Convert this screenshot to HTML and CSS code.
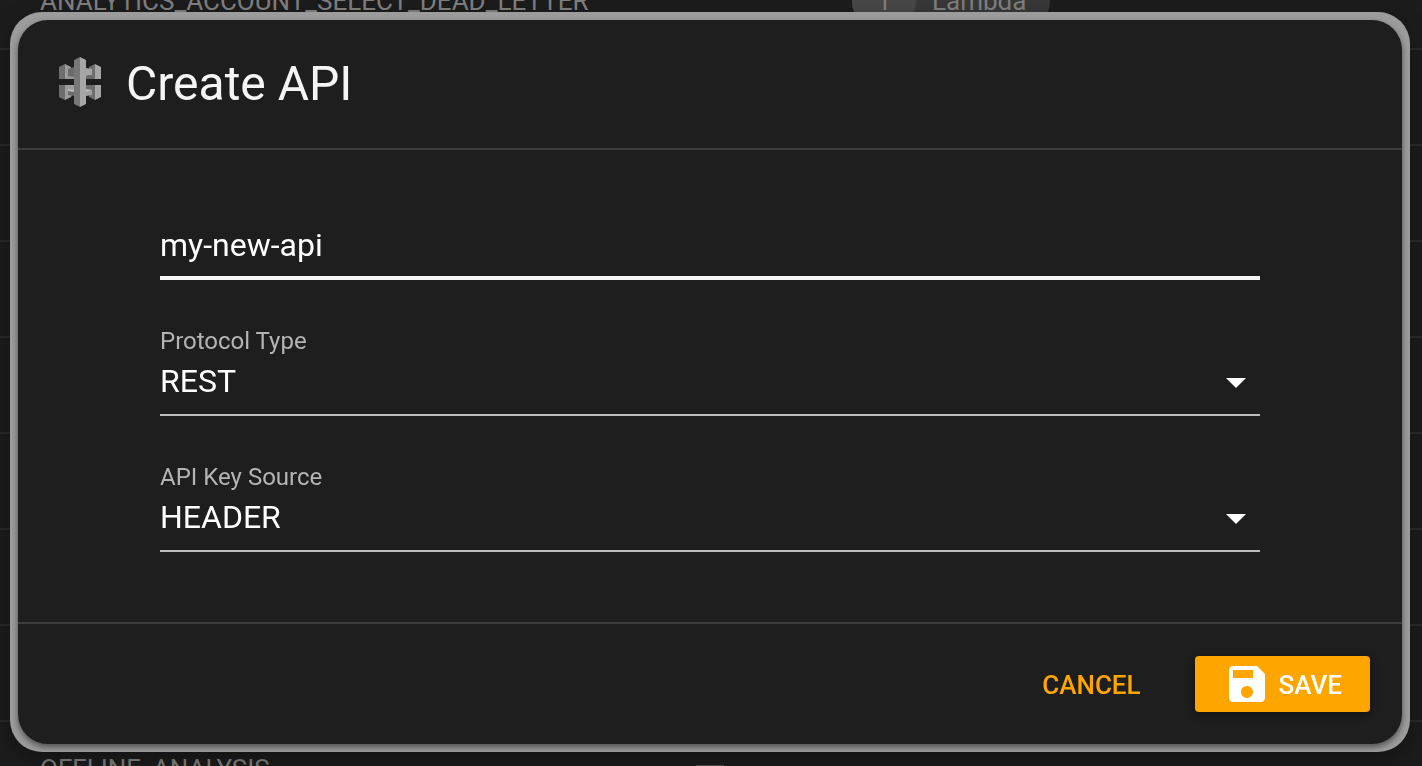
FILE: index.html
```
<!DOCTYPE html>
<html lang="en">

<head>
<meta charset="UTF-8">
<meta name="viewport" content="width=device-width, initial-scale=1.0">
<title>Create API</title>
<link rel="stylesheet" href="styles.css">
</head>
<body>
<!-- Resource list behind the dialog -->
<table class="resources">
  <tr>
    <td class="name">ANALYTICS_ACCOUNT_SELECT_DEAD_LETTER</td>
    <td class="triggers"></td>
    <td><span class="chip"><span class="chip-count">1</span><span class="chip-label">Lambda</span></span></td>
  </tr>
  <tr><td></td><td></td><td></td></tr>
  <tr><td></td><td></td><td></td></tr>
  <tr><td></td><td></td><td></td></tr>
  <tr><td></td><td></td><td></td></tr>
  <tr><td></td><td></td><td></td></tr>
  <tr><td></td><td></td><td></td></tr>
  <tr><td></td><td></td><td></td></tr>
  <tr>
    <td class="name">OFFLINE_ANALYSIS</td>
    <td class="triggers"><span class="dash"></span></td>
    <td></td>
  </tr>
</table>

<div class="overlay">
  <div class="frame">
    <div class="dialog" role="dialog" aria-labelledby="dialogTitle">
      <header class="dialog-header">
        <svg class="api-icon" viewBox="0 0 44 54" aria-hidden="true">
          <!-- upper arms -->
          <path fill="#9c9c9c" d="M7 7l6 3v11l-6 1z"/>
          <path fill="#6e6e6e" d="M1 10l6-3v15H1z"/>
          <path fill="#6a6a6a" d="M10 12l6-2v11l-6-2z"/>
          <path fill="#949494" d="M7 22l3-3 6 1v2z"/>
          <path fill="#6e6e6e" d="M31 10l6-3v15l-6-1z"/>
          <path fill="#a6a6a6" d="M37 7l6 3v12h-6z"/>
          <path fill="#a6a6a6" d="M28 11l6 1v6l-6 1z"/>
          <path fill="#6a6a6a" d="M28 19l6-1 3 4h-9z"/>
          <!-- lower arms -->
          <path fill="#9c9c9c" d="M7 28h9v6l-3 6-6 3z"/>
          <path fill="#6e6e6e" d="M1 28h6v15l-6-3z"/>
          <path fill="#bcbcbc" d="M10 32l6 1v3l-6-2z"/>
          <path fill="#6a6a6a" d="M10 34l6 1v4l-6-1z"/>
          <path fill="#6e6e6e" d="M28 28h9v15l-6-3v-7h-3z"/>
          <path fill="#a6a6a6" d="M37 28h6v12l-6 3z"/>
          <path fill="#bcbcbc" d="M28 32l6 1-6 3z"/>
          <path fill="#a0a0a0" d="M28 35l6-2v5l-6 1z"/>
          <!-- centre bar -->
          <path fill="#777" d="M16 3l6-3v50l-6-3z"/>
          <path fill="#a6a6a6" d="M22 0l6 3v44l-6 3z"/>
        </svg>
        <h1 id="dialogTitle">Create API</h1>
      </header>
      <form class="dialog-body" id="apiForm">
        <input class="control name-input" type="text" aria-label="Name" value="my-new-api">
        <div class="field">
          <label for="protocolType">Protocol Type</label>
          <div class="select-wrap">
            <select class="control" id="protocolType">
              <option>REST</option>
              <option>HTTP</option>
              <option>WEBSOCKET</option>
            </select>
            <svg class="arrow" viewBox="0 0 20 10" aria-hidden="true"><path d="M0 0l10 10L20 0z"/></svg>
          </div>
        </div>
        <div class="field">
          <label for="keySource">API Key Source</label>
          <div class="select-wrap">
            <select class="control" id="keySource">
              <option>HEADER</option>
              <option>AUTHORIZER</option>
            </select>
            <svg class="arrow" viewBox="0 0 20 10" aria-hidden="true"><path d="M0 0l10 10L20 0z"/></svg>
          </div>
        </div>
      </form>
      <footer class="dialog-footer">
        <button class="button" type="button">CANCEL</button>
        <button class="button save" type="submit" form="apiForm">
          <svg class="save-icon" viewBox="0 0 24 24" aria-hidden="true"><path d="M17 3H5c-1.11 0-2 .9-2 2v14c0 1.1.89 2 2 2h14c1.1 0 2-.9 2-2V7l-4-4zm-5 16c-1.66 0-3-1.34-3-3s1.34-3 3-3 3 1.34 3 3-1.34 3-3 3zm3-10H5V5h10v4z"/></svg>
          SAVE
        </button>
      </footer>
    </div>
  </div>
</div>
</body>
</html>
```
FILE: styles.css
```
* {
  box-sizing: border-box;
}

body {
  font-family: Roboto, sans-serif;
  background-color: #1c1c1c;
  color: #fff;
  height: 100vh;
  margin: 0;
  overflow: hidden;
}

/* the list is scrolled half a row */
.resources {
  width: 100%;
  margin-top: -47px;
  border-collapse: collapse;
  table-layout: fixed;
  color: #808080;
  font-size: 26px;
}

.resources td {
  height: 96px;
  padding: 0 0 0 40px;
  border-bottom: 2px solid #2a2a2a;
  white-space: nowrap;
}

.resources .name {
  width: 656px;
}

.resources .triggers {
  width: 156px;
}

.dash {
  display: block;
  width: 28px;
  height: 8px;
  background-color: #505050;
}

.chip {
  display: inline-flex;
  align-items: center;
  height: 64px;
  border-radius: 32px;
  background-color: #383838;
  vertical-align: middle;
}

.chip-count {
  width: 64px;
  height: 64px;
  border-radius: 50%;
  background-color: #484848;
  line-height: 64px;
  text-align: center;
}

.chip-label {
  padding: 0 24px 0 16px;
}

.overlay {
  position: fixed;
  inset: 0;
  padding: 12px 12px 14px 10px;
}

.frame {
  padding: 8px;
  border-radius: 32px;
  background-color: #9c9c9c;
  box-shadow: 0 8px 24px rgba(0, 0, 0, 0.3);
}

.dialog {
  border-radius: 30px;
  background-color: #1e1e1e;
  box-shadow: 0 3px 6px rgba(0, 0, 0, 0.5);
}

.dialog-header {
  display: flex;
  align-items: center;
  gap: 24px;
  padding: 32px 40px;
  border-bottom: 2px solid #3c3c3c;
}

.dialog-header h1 {
  margin: 0;
  color: #f5f5f5;
  font-size: 48px;
  font-weight: 400;
  line-height: 64px;
}

.api-icon {
  width: 44px;
  height: 54px;
}

.dialog-body {
  display: flex;
  flex-direction: column;
  gap: 46px;
  padding: 64px 142px 70px;
}

.control {
  display: block;
  width: 100%;
  height: 60px;
  margin: 0;
  padding: 0 0 8px;
  border: 0;
  border-bottom: 2px solid #bcbcbc;
  border-radius: 0;
  outline: 0;
  appearance: none;
  background: none;
  color: #fff;
  font-family: inherit;
  font-size: 32px;
}

.name-input {
  height: 66px;
  padding: 0;
  border-bottom: 4px solid #f5f5f5;
}

.control option {
  background-color: #1e1e1e;
}

.field label {
  display: block;
  color: #b4b4b4;
  font-size: 24px;
  line-height: 30px;
}

.select-wrap {
  position: relative;
}

.arrow {
  position: absolute;
  top: 22px;
  right: 14px;
  width: 20px;
  height: 10px;
  fill: #fff;
  pointer-events: none;
}

.dialog-footer {
  display: flex;
  justify-content: flex-end;
  gap: 38px;
  padding: 32px;
  border-top: 2px solid #3c3c3c;
}

.button {
  display: flex;
  align-items: center;
  gap: 8px;
  height: 56px;
  padding: 2px 16px 0;
  border: 0;
  border-radius: 4px;
  background: none;
  color: #ffa500;
  font-family: inherit;
  font-size: 26px;
  font-weight: 500;
}

.save {
  padding: 2px 28px 0;
  background-color: #ffa500;
  color: #fff;
  box-shadow: 0 2px 8px rgba(0, 0, 0, 0.4);
}

.save-icon {
  width: 48px;
  height: 48px;
  margin-top: -2px;
  fill: #fff;
}
```
